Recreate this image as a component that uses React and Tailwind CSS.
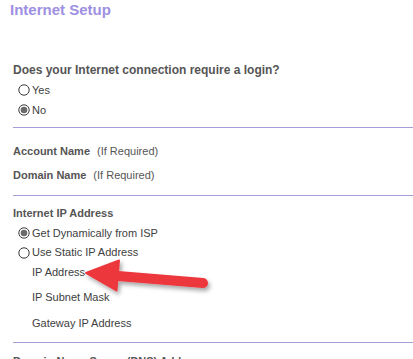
import React from "react";

function Radio({ checked }) {
  return (
    <svg width="12" height="12" viewBox="0 0 12 12" className="shrink-0">
      <circle cx="6" cy="6" r="5.2" fill="#fff" stroke="#3a3a3a" strokeWidth="1" />
      {checked && <circle cx="6" cy="6" r="3.3" fill="#6a6a6a" />}
    </svg>
  );
}

function RadioRow({ checked, label, h = "h-[20px]" }) {
  return (
    <div className={`flex items-center ${h} pl-[5px] gap-[2px] text-[11px] text-[#404040]`}>
      <Radio checked={checked} />
      <span>{label}</span>
    </div>
  );
}

function Line({ mt }) {
  return <div className={`${mt} h-px bg-[#a99cd6] ml-[13px]`} />;
}

export default function App() {
  return (
    <div
      className="relative w-[413px] h-[359px] overflow-hidden bg-white"
      style={{ fontFamily: '"Liberation Sans", Arial, sans-serif' }}
    >
      <div className="h-[20px] flex items-center pl-[10px] text-[15px] font-bold text-[#9d90e2]">
        Internet Setup
      </div>

      <div className="mt-[40px] pl-[13px]">
        <div className="h-[20px] flex items-center text-[12px] font-bold text-[#555]">
          Does your Internet connection require a login?
        </div>
        <RadioRow label="Yes" />
        <RadioRow checked label="No" />
      </div>

      <Line mt="mt-[7px]" />

      <div className="pl-[13px]">
        <div className="mt-[13px] h-[20px] flex items-center text-[11px] text-[#555]">
          <span className="font-bold">Account Name</span>
          <span className="ml-[7px]">(If Required)</span>
        </div>
        <div className="mt-[4px] h-[20px] flex items-center text-[11px] text-[#555]">
          <span className="font-bold">Domain Name</span>
          <span className="ml-[7px]">(If Required)</span>
        </div>
      </div>

      <Line mt="mt-[10px]" />

      <div className="pl-[13px]">
        <div className="mt-[7px] h-[20px] flex items-center text-[11px] font-bold text-[#555]">
          Internet IP Address
        </div>
        <RadioRow checked label="Get Dynamically from ISP" />
        <RadioRow label="Use Static IP Address" h="h-[19px]" />
        <div className="pl-[19px] text-[11px] text-[#404040]">
          <div className="h-[20px] flex items-center">IP Address</div>
          <div className="mt-[5px] h-[20px] flex items-center">IP Subnet Mask</div>
          <div className="mt-[6px] h-[20px] flex items-center">Gateway IP Address</div>
        </div>
      </div>

      <Line mt="mt-[9px]" />

      <div className="pl-[13px]">
        <div className="mt-[8px] h-[20px] flex items-center text-[11px] font-bold text-[#555]">
          Domain Name Server (DNS) Address
        </div>
      </div>

      <svg
        className="absolute left-0 top-0 pointer-events-none"
        width="413"
        height="359"
        viewBox="0 0 413 359"
      >
        <defs>
          <filter id="sh" x="-20%" y="-50%" width="140%" height="200%">
            <feDropShadow dx="2" dy="3" stdDeviation="2" floodColor="#000" floodOpacity="0.35" />
          </filter>
        </defs>
        <g filter="url(#sh)">
          <line x1="112" y1="275.5" x2="203" y2="283" stroke="#ec373c" strokeWidth="10" strokeLinecap="round" />
          <polygon points="86,273 119,260.5 116.5,290.5" fill="#ec373c" strokeLinejoin="round" stroke="#ec373c" strokeWidth="2" />
        </g>
      </svg>
    </div>
  );
}
